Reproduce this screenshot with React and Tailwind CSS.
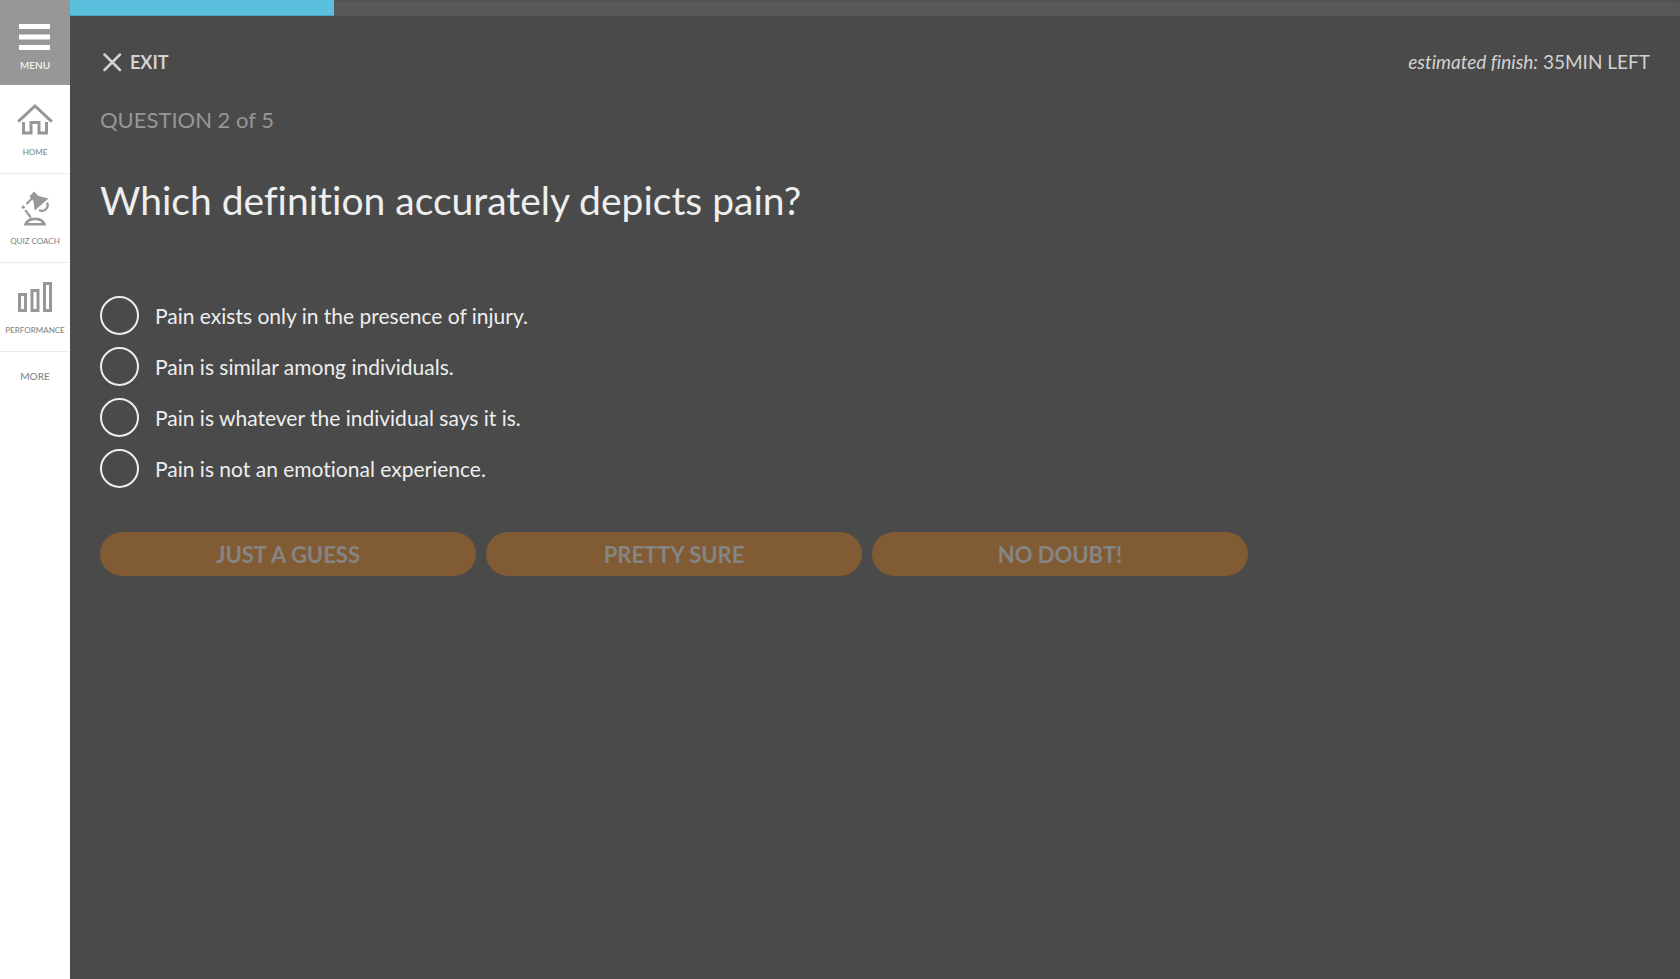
const answers = [
  'Pain exists only in the presence of injury.',
  'Pain is similar among individuals.',
  'Pain is whatever the individual says it is.',
  'Pain is not an emotional experience.',
];

const confidence = ['JUST A GUESS', 'PRETTY SURE', 'NO DOUBT!'];

function HomeIcon() {
  return (
    <svg width="36" height="32" viewBox="0 0 36 32" fill="none" stroke="#979797" strokeWidth="3" aria-hidden="true">
      <path d="M1.2 17.600 18 2l16.800 15.600" />
      <path d="M6.500 18v11H14V18.500h8V29h7.500V18" />
    </svg>
  );
}

function LampIcon() {
  return (
    <svg width="28" height="36" viewBox="0 0 28 36" fill="none" stroke="#979797" aria-hidden="true">
      <path d="M13 0.500 17.500 5 27.500 7.500 13.700 19.500 12.500 10 8.500 5.500Z" fill="#979797" stroke="none" />
      <path d="M11 7.500 5.500 13" strokeWidth="2.200" />
      <circle cx="2.200" cy="16.200" r="1.600" fill="#979797" stroke="none" />
      <path d="M4.200 19.200 9.800 26.500" strokeWidth="2.200" />
      <path d="M26 11.500a5.600 5.600 0 0 1-8 7.300" strokeWidth="2.200" />
      <path d="M3 34.500c.5-4.500 5-8 11-8s10.500 3.500 11 8Z" fill="#979797" stroke="none" />
      <path d="M7 32c2-3.600 12-3.600 14 0Z" fill="#fff" stroke="none" />
    </svg>
  );
}

function BarsIcon() {
  return (
    <svg width="34" height="32" viewBox="0 0 34 32" fill="none" stroke="#979797" strokeWidth="3" aria-hidden="true">
      <path d="M1.500 12.500h6v16h-6ZM14 8.500h6v20h-6ZM26.500 1.500h6v27h-6Z" />
    </svg>
  );
}

const links = [
  { label: 'HOME', Icon: HomeIcon },
  { label: 'QUIZ COACH', Icon: LampIcon },
  { label: 'PERFORMANCE', Icon: BarsIcon },
];

function Sidebar() {
  return (
    <nav className="flex w-[70px] shrink-0 flex-col bg-white text-[#868686]">
      <button type="button" className="flex h-[85px] flex-col items-center bg-[#979797] pt-6 text-white">
        <svg width="32" height="26" viewBox="0 0 32 26" fill="#fff" aria-hidden="true">
          <path d="M0 0h31v5H0ZM0 10.500h31v5H0ZM0 21h31v5H0Z" />
        </svg>
        <span className="mt-[7px] text-[10px] leading-4">MENU</span>
      </button>
      {links.map(({ label, Icon }) => (
        <a key={label} href="#" className="flex flex-col items-center border-b border-[#ececec] pb-[15px] pt-[17px]">
          <span className="flex h-9 items-center">
            <Icon />
          </span>
          <span className="mt-2 text-[8px] font-medium leading-3">{label}</span>
        </a>
      ))}
      <a href="#" className="py-4 text-center text-[10px] font-medium leading-4">
        MORE
      </a>
    </nav>
  );
}

export default function App() {
  return (
    <div className="flex min-h-screen bg-[#4a4a4a] font-['Lato','Open_Sans',sans-serif] [font-variant-ligatures:none]">
      <Sidebar />
      <div className="flex min-w-0 grow flex-col">
        <div
          className="h-4 bg-[#56585a] shadow-[inset_0_1px_2px_rgba(0,0,0,0.1)]"
          role="progressbar"
          aria-label="Quiz progress"
          aria-valuenow={16}
          aria-valuemin={0}
          aria-valuemax={100}
        >
          <div className="h-full w-[16.4%] bg-[#5bc0de] shadow-[inset_0_-1px_0_rgba(0,0,0,0.15)]" />
        </div>
        <main className="px-[30px] pt-8 text-[#eeeeee]">
          <header className="flex items-center justify-between leading-7 text-[#d2d2d2]">
            <button type="button" className="flex items-center gap-2 pl-[3px] text-lg font-bold leading-7">
              <svg width="19" height="19" viewBox="0 0 19 19" fill="none" stroke="#d2d2d2" strokeWidth="2.500" strokeLinecap="round" aria-hidden="true">
                <path d="m1.500 1.500 15.500 15.500M17 1.500l-15.500 15.500" />
              </svg>
              EXIT
            </button>
            <p className="text-[19px] leading-7">
              <em>estimated finish:</em> 35MIN LEFT
            </p>
          </header>
          <p className="mt-7 text-[22px] leading-8 text-[#979797]">QUESTION 2 of 5</p>
          <h1 className="mt-9 text-[39px] leading-[56px]">Which definition accurately depicts pain?</h1>
          <div role="radiogroup" aria-label="Answers" className="mt-[68px] flex flex-col items-start gap-3">
            {answers.map((answer) => (
              <label key={answer} className="flex items-center gap-4 text-[21px] leading-7">
                <input
                  type="radio"
                  name="answer"
                  className="size-[39px] shrink-0 appearance-none rounded-full border-2 border-[#eeeeee] checked:bg-[#eeeeee]"
                />
                {answer}
              </label>
            ))}
          </div>
          <div className="mt-11 grid max-w-[1148px] grid-cols-3 gap-2.5">
            {confidence.map((label) => (
              <button
                key={label}
                type="button"
                disabled
                className="h-11 rounded-full bg-[#815b33] text-[22px] font-bold text-[#858585]"
              >
                {label}
              </button>
            ))}
          </div>
        </main>
      </div>
    </div>
  );
}
